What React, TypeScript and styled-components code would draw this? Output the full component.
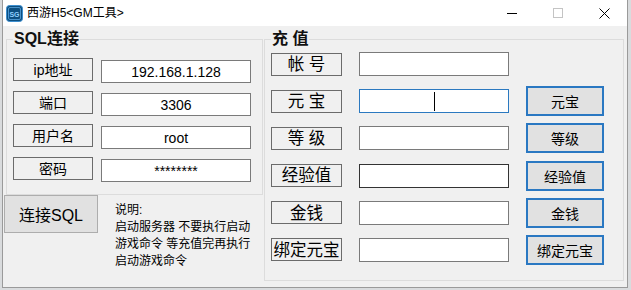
import styled, { createGlobalStyle } from 'styled-components';

const font = `"Liberation Sans", "Noto Sans CJK SC", sans-serif`;

const GlobalStyle = createGlobalStyle`
  html, body {
    margin: 0;
    background: #d9dbdd;
  }
  body {
    font-family: ${font};
    color: #000;
  }
`;

const Window = styled.div`
  box-sizing: border-box;
  width: 626px;
  height: 288px;
  margin-left: 2px;
  border: 1px solid #9a9a9a;
  border-top: none;
  display: flex;
  flex-direction: column;
  background: #f0f0f0;
`;

const TitleBar = styled.div`
  flex: none;
  height: 26px;
  display: flex;
  align-items: center;
  background: #fff;
`;

const AppIcon = styled.svg`
  margin-left: 3px;
  flex: none;
`;

const Title = styled.span`
  margin-left: 4px;
  font-size: 12px;
  line-height: 1;
  white-space: nowrap;
`;

const Spacer = styled.div`
  flex: 1;
`;

const CaptionButton = styled.div`
  width: 46px;
  height: 26px;
  display: flex;
  align-items: center;
  justify-content: center;
`;

const Client = styled.div`
  flex: 1;
  display: flex;
  align-items: flex-start;
`;

const LeftColumn = styled.div`
  flex: none;
  width: 260px;
  display: flex;
  flex-direction: column;
`;

const GroupBox = styled.fieldset<{ $left: number; $width: number; $height: number; $padTop: number }>`
  box-sizing: border-box;
  margin: 5px 0 0 ${(p) => p.$left}px;
  width: ${(p) => p.$width}px;
  height: ${(p) => p.$height}px;
  padding: ${(p) => p.$padTop}px 6px 0;
  border: 1px solid #dcdcdc;
  min-inline-size: 0;
`;

const Legend = styled.legend`
  padding: 0 1px;
  font-size: 16px;
  font-weight: bold;
  line-height: 16px;
  white-space: pre;
  color: #111;
`;

const SqlRows = styled.div`
  display: flex;
  flex-direction: column;
  gap: 8px;
`;

const SqlRow = styled.div`
  display: flex;
  align-items: flex-start;
  gap: 8px;
`;

const Caption = styled.div<{ $width: number; $size: number }>`
  box-sizing: border-box;
  flex: none;
  width: ${(p) => p.$width}px;
  height: 23px;
  border: 1px solid #6b6b6b;
  display: flex;
  align-items: center;
  justify-content: center;
  font-size: ${(p) => p.$size}px;
  line-height: 1;
  white-space: pre;
`;

const Field = styled.div<{ $state?: 'focus' | 'hover'; $top?: number; $height?: number }>`
  box-sizing: border-box;
  flex: none;
  width: 150px;
  height: ${(p) => p.$height ?? 24}px;
  margin-top: ${(p) => p.$top ?? 0}px;
  background: #fff;
  border: 1px solid
    ${(p) => (p.$state === 'focus' ? '#2b79c0' : p.$state === 'hover' ? '#333' : '#7a7a7a')};
  display: flex;
  align-items: center;
  justify-content: center;
  font-size: 14px;
  line-height: 1;
`;

const Caret = styled.span`
  width: 1px;
  height: 19px;
  background: #000;
`;

const ConnectArea = styled.div`
  display: flex;
  align-items: flex-start;
  padding-left: 1px;
`;

const ConnectButton = styled.button`
  box-sizing: border-box;
  flex: none;
  width: 94px;
  height: 38px;
  padding: 0;
  border: 1px solid #adadad;
  background: #e1e1e1;
  font-family: ${font};
  font-size: 16px;
  color: #000;
`;

const Note = styled.div`
  margin: 7px 0 0 17px;
  font-size: 12px;
  line-height: 17px;
  white-space: nowrap;
`;

const ChargeRows = styled.div`
  display: flex;
  flex-direction: column;
  gap: 7.2px;
  padding-top: 2px;
`;

const ChargeRow = styled.div`
  display: flex;
  align-items: center;
  gap: 17px;
  height: 30px;
`;

const ActionButton = styled.button`
  box-sizing: border-box;
  flex: none;
  width: 78px;
  height: 30px;
  padding: 0;
  border: 2px solid #2a78c2;
  background: #e1e1e1;
  font-family: ${font};
  font-size: 14px;
  color: #000;
`;

const sqlFields = [
  { label: 'ip地址', value: '192.168.1.128' },
  { label: '端口', value: '3306' },
  { label: '用户名', value: 'root' },
  { label: '密码', value: '********' },
];

type Charge = { label: string; action?: string; state?: 'focus' | 'hover' };

const charges: Charge[] = [
  { label: '帐 号' },
  { label: '元 宝', action: '元宝', state: 'focus' },
  { label: '等 级', action: '等级' },
  { label: '经验值', action: '经验值', state: 'hover' },
  { label: '金钱', action: '金钱' },
  { label: '绑定元宝', action: '绑定元宝' },
];

const App = () => {
  return (
    <>
      <GlobalStyle />
      <Window>
        <TitleBar>
          <AppIcon width="17" height="17" viewBox="0 0 17 17">
            <rect x="0.5" y="0.5" width="16" height="16" rx="3" fill="#0d4f80" stroke="#3d8fd0" />
            <rect x="2.5" y="2.5" width="12" height="12" rx="1.5" fill="none" stroke="#5aa6e0" strokeWidth="0.8" />
            <text x="8.5" y="11.5" textAnchor="middle" fontSize="7" fontWeight="bold" fill="#8fd0ff" fontFamily="Liberation Sans, sans-serif">SG</text>
          </AppIcon>
          <Title>西游H5&lt;GM工具&gt;</Title>
          <Spacer />
          <CaptionButton>
            <svg width="10" height="10" viewBox="0 0 10 10">
              <path d="M0 5.5h10" stroke="#000" strokeWidth="1" />
            </svg>
          </CaptionButton>
          <CaptionButton>
            <svg width="10" height="10" viewBox="0 0 10 10">
              <rect x="0.5" y="0.5" width="9" height="9" fill="none" stroke="#c4c4c4" />
            </svg>
          </CaptionButton>
          <CaptionButton>
            <svg width="11" height="11" viewBox="0 0 11 11">
              <path d="M0.5 0.5l10 10M10.5 0.5l-10 10" stroke="#000" strokeWidth="1" />
            </svg>
          </CaptionButton>
        </TitleBar>
        <Client>
          <LeftColumn>
            <GroupBox $left={3} $width={257} $height={164} $padTop={11}>
              <Legend>SQL连接</Legend>
              <SqlRows>
                {sqlFields.map((f) => (
                  <SqlRow key={f.label}>
                    <Caption $width={80} $size={14}>{f.label}</Caption>
                    <Field $top={2} $height={23}>{f.value}</Field>
                  </SqlRow>
                ))}
              </SqlRows>
            </GroupBox>
            <ConnectArea>
              <ConnectButton>连接SQL</ConnectButton>
              <Note>
                说明:
                <br />
                启动服务器 不要执行启动
                <br />
                游戏命令 等充值完再执行
                <br />
                启动游戏命令
              </Note>
            </ConnectArea>
          </LeftColumn>
          <GroupBox $left={1} $width={360} $height={250} $padTop={0}>
            <Legend>充 值</Legend>
            <ChargeRows>
              {charges.map((c) => (
                <ChargeRow key={c.label}>
                  <Caption $width={71} $size={16.5}>{c.label}</Caption>
                  <Field $state={c.state}>{c.state === 'focus' && <Caret />}</Field>
                  {c.action && <ActionButton>{c.action}</ActionButton>}
                </ChargeRow>
              ))}
            </ChargeRows>
          </GroupBox>
        </Client>
      </Window>
    </>
  );
};

export default App;
